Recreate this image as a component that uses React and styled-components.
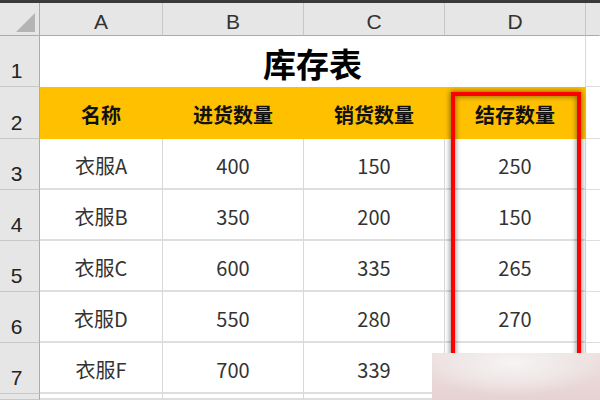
import React from "react";
import styled, { createGlobalStyle } from "styled-components";

const Global = createGlobalStyle`
  html, body { margin: 0; padding: 0; background: #fff; }
  body { width: 600px; height: 400px; overflow: hidden; }
  #root { width: 600px; height: 400px; }
`;

const Sheet = styled.div`
  position: relative;
  width: 600px;
  height: 400px;
  overflow: hidden;
  display: grid;
  grid-template-columns: 40px 123px 141px 141px 141px 1fr;
  grid-template-rows: 3px 33px 51px 52px 51px 51px 51px 51px 51px 1fr;
  font-family: "Noto Sans CJK SC", "Noto Sans", sans-serif;
  background: #fff;
`;

const TopStrip = styled.div`
  grid-column: 1 / -1;
  background: #3a3a3a;
`;

const Corner = styled.div`
  background: #e6e6e6;
  border-right: 1px solid #ababab;
  border-bottom: 1px solid #ababab;
  box-sizing: border-box;
  display: flex;
  align-items: flex-end;
  justify-content: flex-end;
  padding: 0 4px 3px 0;
`;

const Triangle = styled.div`
  width: 0;
  height: 0;
  border-left: 19px solid transparent;
  border-bottom: 19px solid #b4b4b4;
`;

const ColHead = styled.div`
  background: #e6e6e6;
  border-right: 1px solid ${(p) => (p.$last ? "transparent" : "#c6c6c6")};
  border-bottom: 1px solid #ababab;
  box-sizing: border-box;
  display: flex;
  align-items: flex-end;
  justify-content: center;
  padding-bottom: 1px;
  font-family: "Liberation Sans", "Noto Sans", sans-serif;
  font-size: 21px;
  color: #333;
`;

const RowHead = styled.div`
  background: #e6e6e6;
  border-right: 1px solid #ababab;
  border-bottom: 1px solid #c8c8c8;
  box-sizing: border-box;
  display: flex;
  align-items: flex-end;
  justify-content: center;
  padding: 0 6px 3px 0;
  font-family: "Liberation Sans", "Noto Sans", sans-serif;
  font-size: 21px;
  color: #222;
`;

const Title = styled.div`
  grid-column: 2 / 6;
  border-right: 1px solid #d8d8d8;
  box-sizing: border-box;
  display: flex;
  align-items: flex-end;
  justify-content: center;
  padding-bottom: 1px;
  font-size: 33px;
  font-weight: 700;
  color: #000;
  line-height: 1.4;
`;

const Cell = styled.div`
  background: ${(p) => (p.$head ? "#ffc000" : "#fff")};
  border-right: 1px solid ${(p) => (p.$head ? "#ffc000" : "#d8d8d8")};
  border-bottom: ${(p) => (p.$head ? "0" : "2px solid #dedede")};
  box-sizing: border-box;
  display: flex;
  align-items: center;
  justify-content: center;
  padding-top: ${(p) => (p.$head ? "2px" : "3px")};
  font-size: 20px;
  font-weight: ${(p) => (p.$head ? 700 : 400)};
  color: ${(p) => (p.$head ? "#111" : "#333")};
`;

const Filler = styled.div`
  border-bottom: ${(p) => (p.$plain ? "0" : "1px solid #dedede")};
  background: #fff;
`;

const HighlightBox = styled.div`
  position: absolute;
  left: 451px;
  top: 92px;
  width: 130px;
  height: 330px;
  box-sizing: border-box;
  border: 4px solid #ff0000;
  box-shadow: 0 0 5px 1px rgba(0, 0, 0, 0.45),
    inset 0 0 5px 1px rgba(0, 0, 0, 0.4);
  pointer-events: none;
`;

const Watermark = styled.div`
  position: absolute;
  left: 432px;
  top: 353px;
  width: 168px;
  height: 47px;
  background:
    radial-gradient(ellipse 70% 90% at 48% 20%, rgba(246, 244, 244, 1) 0%, rgba(240, 232, 232, 0.9) 45%, rgba(232, 214, 214, 0) 80%),
    linear-gradient(180deg, #efe0e0 0%, #e6d2d2 100%);
`;

const rows = [
  ["衣服A", "400", "150", "250"],
  ["衣服B", "350", "200", "150"],
  ["衣服C", "600", "335", "265"],
  ["衣服D", "550", "280", "270"],
  ["衣服F", "700", "339", ""],
];

export default function App() {
  return (
    <>
      <Global />
      <Sheet>
        <TopStrip />
        <Corner>
          <Triangle />
        </Corner>
        {["A", "B", "C", "D"].map((c) => (
          <ColHead key={c}>{c}</ColHead>
        ))}
        <ColHead $last />

        <RowHead>1</RowHead>
        <Title>库存表</Title>
        <Filler />

        <RowHead>2</RowHead>
        {["名称", "进货数量", "销货数量", "结存数量"].map((h) => (
          <Cell key={h} $head>
            {h}
          </Cell>
        ))}
        <Filler />

        {rows.map((r, i) => (
          <React.Fragment key={i}>
            <RowHead>{i + 3}</RowHead>
            {r.map((v, j) => (
              <Cell key={j}>{v}</Cell>
            ))}
            <Filler />
          </React.Fragment>
        ))}

        <RowHead />
        <Cell />
        <Cell />
        <Cell />
        <Cell />
        <Filler $plain />

        <HighlightBox />
        <Watermark />
      </Sheet>
    </>
  );
}
